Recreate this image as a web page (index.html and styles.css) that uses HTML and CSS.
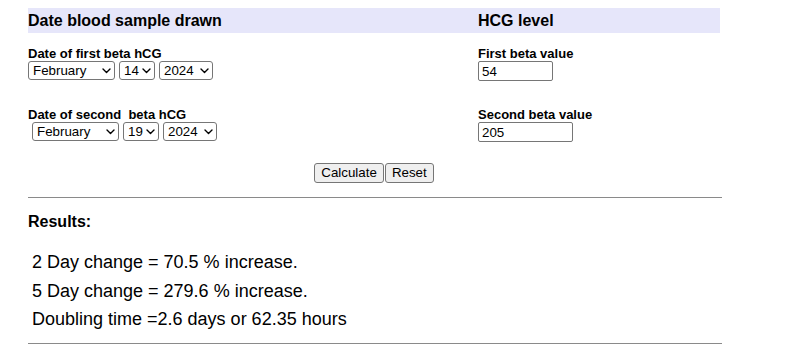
FILE: index.html
```html
<!DOCTYPE html>
<html>
<head>
<meta charset="utf-8">
<link rel="stylesheet" href="styles.css">
</head>
<body>
<div class="page">
  <form class="calc">
    <div class="grid">
      <div class="band">Date blood sample drawn</div>
      <div class="band">HCG level</div>

      <div class="field first">
        <div class="label">Date of first beta hCG</div>
        <div class="controls">
          <span class="sel month"><select><option>February</option></select><svg class="chev" width="9" height="6" viewBox="0 0 9 6"><path d="M1 1 L4.5 4.5 L8 1" fill="none" stroke="#000" stroke-width="1.4" stroke-linecap="round" stroke-linejoin="round"/></svg></span>
          <span class="sel day"><select><option>14</option></select><svg class="chev" width="9" height="6" viewBox="0 0 9 6"><path d="M1 1 L4.5 4.5 L8 1" fill="none" stroke="#000" stroke-width="1.4" stroke-linecap="round" stroke-linejoin="round"/></svg></span>
          <span class="sel year"><select><option>2024</option></select><svg class="chev" width="9" height="6" viewBox="0 0 9 6"><path d="M1 1 L4.5 4.5 L8 1" fill="none" stroke="#000" stroke-width="1.4" stroke-linecap="round" stroke-linejoin="round"/></svg></span>
        </div>
      </div>
      <div class="field first">
        <div class="label">First beta value</div>
        <div class="controls">
          <input class="val short" type="text" value="54">
        </div>
      </div>

      <div class="field second">
        <div class="label">Date of second&nbsp; beta hCG</div>
        <div class="controls indent">
          <span class="sel month"><select><option>February</option></select><svg class="chev" width="9" height="6" viewBox="0 0 9 6"><path d="M1 1 L4.5 4.5 L8 1" fill="none" stroke="#000" stroke-width="1.4" stroke-linecap="round" stroke-linejoin="round"/></svg></span>
          <span class="sel day"><select><option>19</option></select><svg class="chev" width="9" height="6" viewBox="0 0 9 6"><path d="M1 1 L4.5 4.5 L8 1" fill="none" stroke="#000" stroke-width="1.4" stroke-linecap="round" stroke-linejoin="round"/></svg></span>
          <span class="sel year"><select><option>2024</option></select><svg class="chev" width="9" height="6" viewBox="0 0 9 6"><path d="M1 1 L4.5 4.5 L8 1" fill="none" stroke="#000" stroke-width="1.4" stroke-linecap="round" stroke-linejoin="round"/></svg></span>
        </div>
      </div>
      <div class="field second">
        <div class="label">Second beta value</div>
        <div class="controls">
          <input class="val long" type="text" value="205">
        </div>
      </div>
    </div>

    <div class="buttons">
      <button type="button" class="btn">Calculate</button><button type="reset" class="btn">Reset</button>
    </div>
  </form>

  <div class="rule"></div>

  <div class="results">
    <div class="results-title">Results:</div>
    <div class="line">2 Day change = 70.5 % increase.</div>
    <div class="line">5 Day change = 279.6 % increase.</div>
    <div class="line">Doubling time =2.6 days or 62.35 hours</div>
  </div>

  <div class="rule bottom"></div>
</div>
</body>
</html>
```

FILE: styles.css
```css
* { box-sizing: border-box; }

html, body {
  margin: 0;
  padding: 0;
  background: #ffffff;
}

body {
  font-family: "Liberation Sans", Arial, sans-serif;
  color: #000000;
}

.page {
  padding: 8px 0 0 28px;
  width: 722px;
}

.calc {
  margin: 0;
  width: 692px;
}

.grid {
  display: grid;
  grid-template-columns: 450px 242px;
}

.band {
  background: #e6e6fa;
  height: 25px;
  padding-top: 4px;
  font-size: 16px;
  line-height: 18px;
  font-weight: bold;
}

.field.first { padding-top: 14px; }
.field.second { padding-top: 28px; }

.label {
  font-size: 13px;
  line-height: 14px;
  font-weight: bold;
}

.controls {
  display: flex;
  align-items: flex-start;
  gap: 4px;
  height: 19px;
}

.controls.indent { padding-left: 4px; }

.sel {
  position: relative;
  display: block;
  height: 19px;
}

.sel select {
  -webkit-appearance: none;
  appearance: none;
  display: block;
  width: 100%;
  font-family: "Liberation Sans", Arial, sans-serif;
  font-size: 13.33px;
  line-height: 17px;
  height: 19px;
  margin: 0;
  padding: 0 0 0 4px;
  border: 1px solid #767676;
  border-radius: 3px;
  background: #ffffff;
  color: #000000;
}

.chev {
  position: absolute;
  right: 4px;
  top: 7px;
  pointer-events: none;
}

.sel.month { width: 87px; }
.sel.day { width: 36px; }
.sel.year { width: 54px; }

.val {
  font-family: "Liberation Sans", Arial, sans-serif;
  font-size: 13.33px;
  height: 20px;
  margin: 0;
  padding: 1px 3px;
  border: 1px solid #767676;
  border-radius: 2px;
  background: #ffffff;
  color: #000000;
}

.val.short { width: 75px; }
.val.long { width: 95px; }

.buttons {
  display: flex;
  justify-content: center;
  padding-top: 22px;
}

.btn {
  font-family: "Liberation Sans", Arial, sans-serif;
  font-size: 13.33px;
  height: 20px;
  margin: 0;
  padding: 0 6px;
  border: 1px solid #767676;
  border-radius: 3px;
  background: #efefef;
  color: #000000;
  line-height: 16px;
}

.btn + .btn { margin-left: 1px; }

.rule {
  width: 694px;
  margin-top: 14px;
  border-top: 1px solid #8a8a8a;
  height: 1px;
}

.results {
  padding-top: 15px;
}

.results-title {
  font-size: 16px;
  line-height: 18px;
  font-weight: bold;
  margin-bottom: 17px;
}

.line {
  font-size: 18px;
  line-height: 28.5px;
  padding-left: 4px;
}

.rule.bottom {
  margin-top: 9px;
}
```
